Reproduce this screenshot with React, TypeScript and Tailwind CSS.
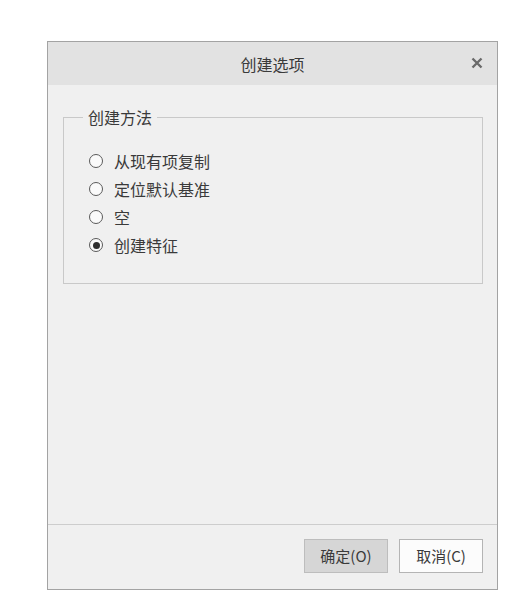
import { useState } from "react";

const options = ["从现有项复制", "定位默认基准", "空", "创建特征"];

export default function App() {
  const [selected, setSelected] = useState(3);

  return (
    <div
      className="w-[523px] h-[600px] bg-white pt-[41px] pl-[47px] text-[#3a3a3a]"
      style={{ fontFamily: '"Noto Sans CJK SC", "Noto Sans", sans-serif' }}
    >
      <div className="w-[451px] h-[549px] flex flex-col border border-[#a3a3a3] bg-[#f0f0f0]">
        {/* Title bar */}
        <div className="relative h-[43px] shrink-0 flex items-center justify-center bg-[#e2e2e2]">
          <span className="text-[16px] leading-none">创建选项</span>
          <button className="absolute right-[13px] top-[14px] w-[14px] h-[14px] flex items-center justify-center">
            <svg width="12" height="12" viewBox="0 0 12 12">
              <path d="M1.5 1.5L10.5 10.5M10.5 1.5L1.5 10.5" stroke="#6a6a6a" strokeWidth="2.4" />
            </svg>
          </button>
        </div>

        {/* Body */}
        <div className="flex-1 px-[15px] pt-[21px]">
          <fieldset className="w-[420px] h-[178px] border border-[#c9c9c9] pl-[19px]">
            <legend className="px-[5px] text-[16px] leading-[22px]">创建方法</legend>
            <div className="flex flex-col pt-[19px] pl-[6px]">
              {options.map((opt, i) => (
                <label
                  key={opt}
                  className="h-[28px] flex items-center gap-[11px] text-[16px] cursor-pointer"
                  onClick={() => setSelected(i)}
                >
                  <span className="w-[14px] h-[14px] rounded-full border border-[#5a5a5a] bg-[#fafafa] flex items-center justify-center">
                    {selected === i && <span className="w-[7px] h-[7px] rounded-full bg-[#2e2e2e]" />}
                  </span>
                  {opt}
                </label>
              ))}
            </div>
          </fieldset>
        </div>

        {/* Footer */}
        <div className="h-[65px] shrink-0 border-t border-[#cdcdcd] flex justify-end items-start gap-[11px] pt-[14px] pr-[14px]">
          <button className="w-[84px] h-[34px] bg-[#d6d6d6] border border-[#bdbdbd] text-[15px]">确定(O)</button>
          <button className="w-[84px] h-[34px] bg-[#fcfcfc] border border-[#b4b4b4] text-[15px]">取消(C)</button>
        </div>
      </div>
    </div>
  );
}
